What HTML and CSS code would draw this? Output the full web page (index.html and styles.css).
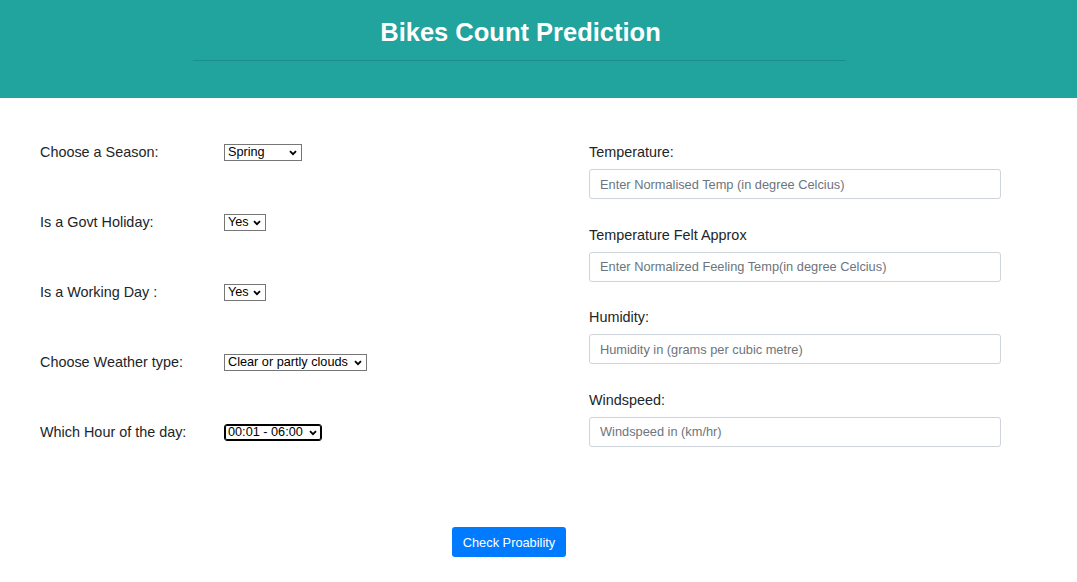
FILE: index.html
```html
<!DOCTYPE html>
<html>
<head>
<meta charset="utf-8">
<link rel="stylesheet" href="styles.css">
</head>
<body>
<header class="banner">
  <h1 class="title">Bikes Count Prediction</h1>
  <hr class="rule">
</header>
<form class="form">
  <div class="cols">
    <div class="left">
      <div class="row"><label class="lbl">Choose a Season:</label>
        <span class="selwrap"><select class="sel w-season"><option>Spring</option><option>Summer</option><option>Fall</option><option>Winter</option></select><svg class="chev" width="8" height="6" viewBox="0 0 8 6"><path d="M1 1.2 L4 4.2 L7 1.2" fill="none" stroke="#000" stroke-width="1.8"/></svg></span></div>
      <div class="row"><label class="lbl">Is a Govt Holiday:</label>
        <span class="selwrap"><select class="sel w-yes"><option>Yes</option><option>No</option></select><svg class="chev" width="8" height="6" viewBox="0 0 8 6"><path d="M1 1.2 L4 4.2 L7 1.2" fill="none" stroke="#000" stroke-width="1.8"/></svg></span></div>
      <div class="row"><label class="lbl">Is a Working Day :</label>
        <span class="selwrap"><select class="sel w-yes"><option>Yes</option><option>No</option></select><svg class="chev" width="8" height="6" viewBox="0 0 8 6"><path d="M1 1.2 L4 4.2 L7 1.2" fill="none" stroke="#000" stroke-width="1.8"/></svg></span></div>
      <div class="row"><label class="lbl">Choose Weather type:</label>
        <span class="selwrap"><select class="sel w-weather"><option>Clear or partly clouds</option><option>Mist</option><option>Light Snow/Rain</option><option>Heavy Rain</option></select><svg class="chev" width="8" height="6" viewBox="0 0 8 6"><path d="M1 1.2 L4 4.2 L7 1.2" fill="none" stroke="#000" stroke-width="1.8"/></svg></span></div>
      <div class="row"><label class="lbl">Which Hour of the day:</label>
        <span class="selwrap"><select class="sel w-hour focus"><option>00:01 - 06:00</option><option>06:01 - 12:00</option><option>12:01 - 18:00</option><option>18:01 - 24:00</option></select><svg class="chev" width="8" height="6" viewBox="0 0 8 6"><path d="M1 1.2 L4 4.2 L7 1.2" fill="none" stroke="#000" stroke-width="1.8"/></svg></span></div>
    </div>
    <div class="right">
      <div class="group"><label class="rlbl">Temperature:</label>
        <input class="inp" type="text" placeholder="Enter Normalised Temp (in degree Celcius)"></div>
      <div class="group"><label class="rlbl">Temperature Felt Approx</label>
        <input class="inp" type="text" placeholder="Enter Normalized Feeling Temp(in degree Celcius)"></div>
      <div class="group"><label class="rlbl">Humidity:</label>
        <input class="inp" type="text" placeholder="Humidity in (grams per cubic metre)"></div>
      <div class="group"><label class="rlbl">Windspeed:</label>
        <input class="inp" type="text" placeholder="Windspeed in (km/hr)"></div>
    </div>
  </div>
  <div class="actions">
    <button class="btn" type="button">Check Proability</button>
  </div>
</form>
</body>
</html>
```
FILE: styles.css
```css
* { box-sizing: border-box; }
html, body { margin: 0; padding: 0; }
body {
  font-family: "Liberation Sans", Arial, sans-serif;
  color: #212529;
  background: #fff;
  font-size: 14px;
}
.banner {
  background: #21a39e;
  height: 98px;
  padding-top: 16px;
}
.title {
  margin: 0;
  text-align: center;
  color: #fff;
  font-size: 25.5px;
  font-weight: bold;
  line-height: 32px;
  padding-right: 36px;
}
.rule {
  margin: 12px 0 0 193px;
  width: 653px;
  border: 0;
  border-top: 1px solid rgba(0,0,0,0.12);
  height: 0;
}
.form { padding: 19px 0 0 40px; }
.cols { display: flex; }
.left { width: 549px; }
.row {
  display: flex;
  align-items: center;
  height: 70px;
}
.lbl { width: 184px; font-size: 14.4px; }
.selwrap { position: relative; display: inline-flex; }
.sel {
  -webkit-appearance: none;
  appearance: none;
  font-family: "Liberation Sans", Arial, sans-serif;
  font-size: 12.7px;
  color: #000;
  border: 1px solid #767676;
  border-radius: 0;
  background: #fff;
  height: 17px;
  line-height: 15px;
  padding: 0 0 0 3px;
  margin: 0;
}
.chev {
  position: absolute;
  right: 5px;
  top: 6px;
  pointer-events: none;
}
.w-season { width: 78px; }
.w-yes { width: 42px; }
.w-weather { width: 143px; }
.w-hour { width: 98px; }
.focus {
  border-color: #000;
  box-shadow: inset 0 0 0 1px #000;
  border-radius: 3px;
}
.right { width: 412px; padding-top: 25px; }
.group { margin-bottom: 25.5px; }
.rlbl { display: block; line-height: 21px; margin-bottom: 6px; font-size: 14.4px; }
.inp {
  display: block;
  width: 412px;
  height: 30px;
  border: 1px solid #ced4da;
  border-radius: 3px;
  padding: 0 10px;
  font-family: "Liberation Sans", Arial, sans-serif;
  font-size: 12.8px;
}
.inp::placeholder { color: #6c757d; }
.actions {
  display: flex;
  padding-left: 412px;
  margin-top: 55px;
}
.btn {
  height: 30px;
  width: 114px;
  background: #007bff;
  color: #fff;
  border: 0;
  border-radius: 3px;
  font-family: "Liberation Sans", Arial, sans-serif;
  font-size: 12.8px;
  padding: 0;
}
```
